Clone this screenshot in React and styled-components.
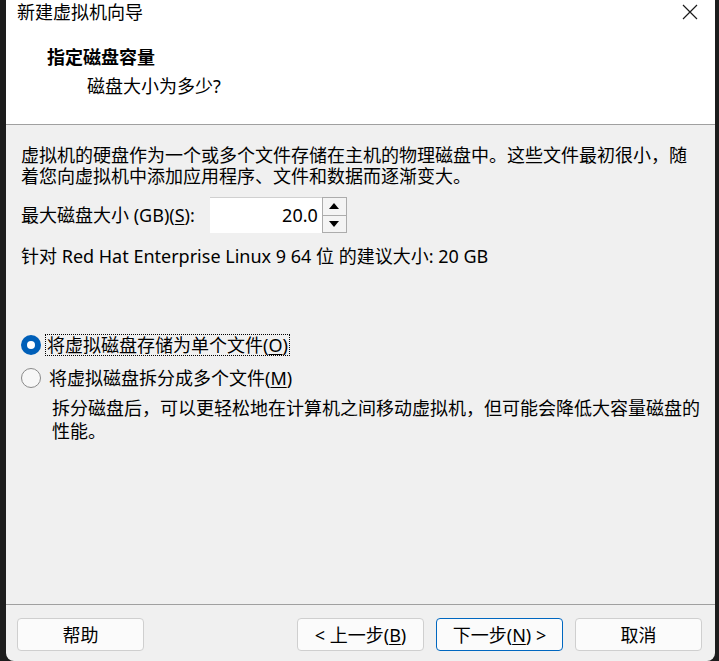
import React from "react";
import styled, { createGlobalStyle } from "styled-components";

const GlobalStyle = createGlobalStyle`
  html, body {
    margin: 0;
    padding: 0;
    background: #1c1c1c;
  }
  body {
    font-family: "Noto Sans", "Noto Sans CJK SC", sans-serif;
    font-size: 18px;
    color: #000;
  }
`;

const Desktop = styled.div`
  display: flex;
  width: 719px;
  height: 661px;
  overflow: hidden;
`;

const Window = styled.div`
  margin-left: 6px;
  width: 709px;
  height: 661px;
  display: flex;
  flex-direction: column;
  background: #f0f0f0;
  border-radius: 0 0 8px 8px;
  overflow: hidden;
`;

const Header = styled.div`
  height: 124px;
  background: #fff;
  border-bottom: 1px solid #a0a0a0;
  display: flex;
  flex-direction: column;
`;

const TitleBar = styled.div`
  display: flex;
  align-items: center;
  justify-content: space-between;
  height: 24px;
  padding: 0 17px 0 11px;
  line-height: 24px;
`;

const CloseIcon = () => (
  <svg width="16" height="16" viewBox="0 0 16 16">
    <path d="M1 1 L15 15 M15 1 L1 15" stroke="#1a1a1a" strokeWidth="1.2" fill="none" />
  </svg>
);

const Heading = styled.div`
  margin-top: 21px;
  padding-left: 41px;
  font-weight: 700;
  line-height: 24px;
`;

const SubHeading = styled.div`
  margin-top: 5px;
  padding-left: 81px;
  line-height: 24px;
`;

const Body = styled.div`
  flex: 1;
  padding: 20px 12px 0 15px;
  display: flex;
  flex-direction: column;
`;

const Paragraph = styled.div`
  line-height: 21px;
  white-space: nowrap;
`;

const SizeRow = styled.div`
  display: flex;
  align-items: center;
  gap: 15px;
  margin-top: 10px;
`;

const Label = styled.span`
  line-height: 21px;
`;

const Key = styled.span`
  text-decoration: underline;
  text-underline-offset: 2px;
`;

const SpinBox = styled.div`
  display: flex;
  height: 36px;
  width: 137px;
  box-sizing: border-box;
  border-top: 1px solid #d0d0d0;
  background: #fff;
`;

const SpinInput = styled.div`
  flex: 1;
  text-align: right;
  padding-right: 4px;
  line-height: 34px;
`;

const SpinButtons = styled.div`
  width: 25px;
  display: flex;
  flex-direction: column;
  border: 1px solid #acacac;
  box-sizing: border-box;
  margin-top: -1px;
  height: 36px;
`;

const SpinButton = styled.div`
  flex: 1;
  display: flex;
  align-items: center;
  justify-content: center;
  background: #f4f4f4;
  border-top: ${(p) => (p.$bottom ? "1px solid #acacac" : "none")};
`;

const Arrow = ({ down }) => (
  <svg width="10" height="6" viewBox="0 0 10 6">
    <path d={down ? "M0 0 L10 0 L5 6 Z" : "M0 6 L10 6 L5 0 Z"} fill="#000" />
  </svg>
);

const Recommend = styled.div`
  margin-top: 13px;
  line-height: 21px;
`;

const Options = styled.div`
  margin-top: 67px;
  display: flex;
  flex-direction: column;
  gap: 11px;
`;

const RadioRow = styled.div`
  display: flex;
  align-items: center;
  gap: 4px;
  height: 22px;
`;

const RadioCircle = styled.span`
  width: 20px;
  height: 20px;
  box-sizing: border-box;
  border-radius: 50%;
  display: flex;
  align-items: center;
  justify-content: center;
  flex-shrink: 0;
  background: ${(p) => (p.$checked ? "#005fb8" : "#f7f7f7")};
  border: ${(p) => (p.$checked ? "none" : "1px solid #8a8a8a")};
  &::after {
    content: "";
    display: ${(p) => (p.$checked ? "block" : "none")};
    width: 8px;
    height: 8px;
    border-radius: 50%;
    background: #fff;
  }
`;

const RadioText = styled.span`
  padding: 0 1px;
  line-height: 20px;
  border: 1px dotted ${(p) => (p.$focused ? "#000" : "transparent")};
  margin-left: ${(p) => (p.$focused ? "0" : "2px")};
`;

const Note = styled.div`
  margin-top: 8px;
  padding-left: 31px;
  line-height: 23px;
  white-space: nowrap;
`;

const Footer = styled.div`
  height: 57px;
  border-top: 1px solid #a0a0a0;
  display: flex;
  align-items: flex-start;
  padding: 13px 13px 0 11px;
  box-sizing: border-box;
`;

const Group = styled.div`
  display: flex;
  gap: 12px;
  margin-left: auto;
`;

const Button = styled.div`
  width: 127px;
  height: 33px;
  box-sizing: border-box;
  border-radius: 4px;
  background: #fbfbfb;
  border: 1px solid ${(p) => (p.$primary ? "#0067c0" : "#cfcfcf")};
  display: flex;
  align-items: center;
  justify-content: center;
  line-height: 20px;
`;

export default function App() {
  return (
    <>
      <GlobalStyle />
      <Desktop>
        <Window>
          <Header>
            <TitleBar>
              <span>新建虚拟机向导</span>
              <CloseIcon />
            </TitleBar>
            <Heading>指定磁盘容量</Heading>
            <SubHeading>磁盘大小为多少?</SubHeading>
          </Header>
          <Body>
            <Paragraph>
              虚拟机的硬盘作为一个或多个文件存储在主机的物理磁盘中。这些文件最初很小，随
              <br />
              着您向虚拟机中添加应用程序、文件和数据而逐渐变大。
            </Paragraph>
            <SizeRow>
              <Label>
                最大磁盘大小 (GB)(<Key>S</Key>):
              </Label>
              <SpinBox>
                <SpinInput>20.0</SpinInput>
                <SpinButtons>
                  <SpinButton>
                    <Arrow />
                  </SpinButton>
                  <SpinButton $bottom>
                    <Arrow down />
                  </SpinButton>
                </SpinButtons>
              </SpinBox>
            </SizeRow>
            <Recommend>针对 Red Hat Enterprise Linux 9 64 位 的建议大小: 20 GB</Recommend>
            <Options>
              <RadioRow>
                <RadioCircle $checked />
                <RadioText $focused>
                  将虚拟磁盘存储为单个文件(<Key>O</Key>)
                </RadioText>
              </RadioRow>
              <RadioRow>
                <RadioCircle />
                <RadioText>
                  将虚拟磁盘拆分成多个文件(<Key>M</Key>)
                </RadioText>
              </RadioRow>
            </Options>
            <Note>
              拆分磁盘后，可以更轻松地在计算机之间移动虚拟机，但可能会降低大容量磁盘的
              <br />
              性能。
            </Note>
          </Body>
          <Footer>
            <Button>帮助</Button>
            <Group>
              <Button>
                &lt; 上一步(<Key>B</Key>)
              </Button>
              <Button $primary>
                下一步(<Key>N</Key>) &gt;
              </Button>
              <Button>取消</Button>
            </Group>
          </Footer>
        </Window>
      </Desktop>
    </>
  );
}
